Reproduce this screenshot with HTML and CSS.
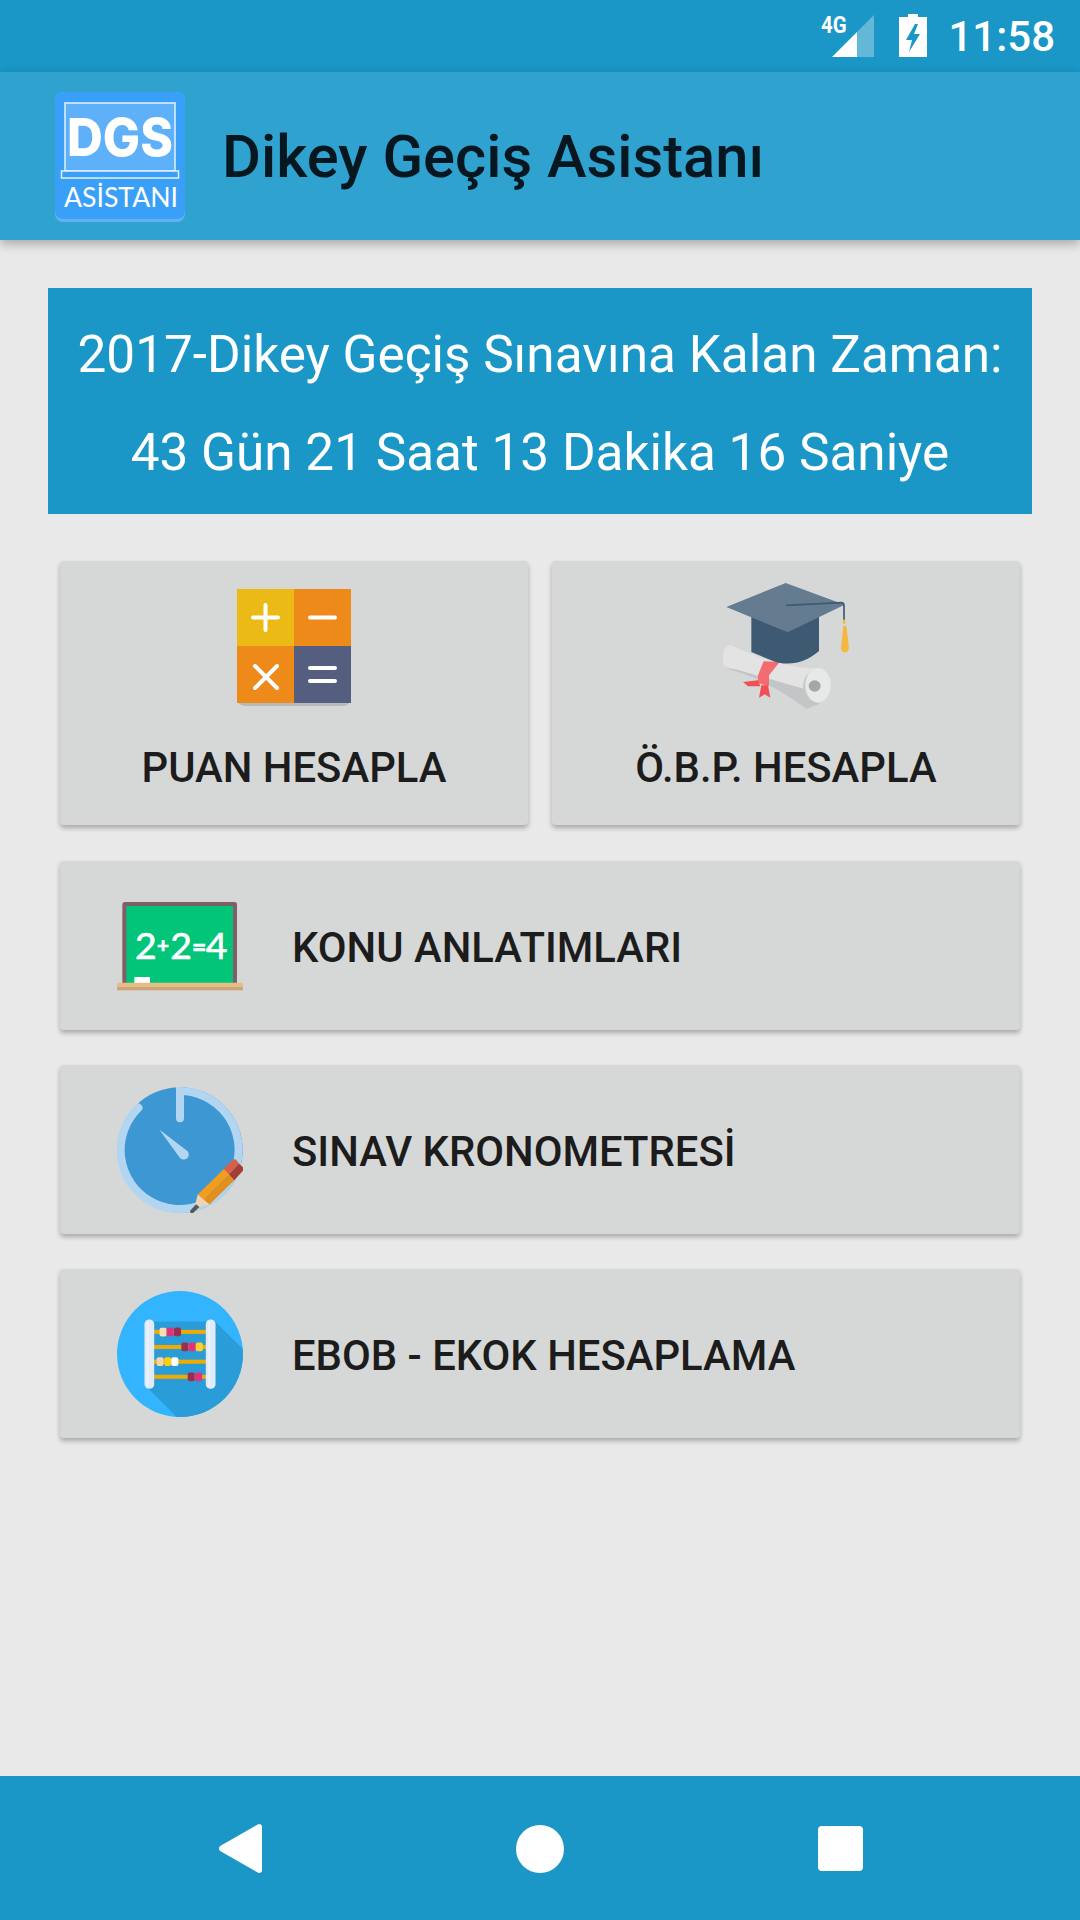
FILE: index.html
```html
<!DOCTYPE html>
<html lang="tr">
<head>
<meta charset="utf-8">
<title>Dikey Geçiş Asistanı</title>
<link rel="stylesheet" href="styles.css">
</head>
<body>
<div class="screen">
  <header class="status">
    <span class="net">4G</span>
    <svg class="cell" viewBox="0 0 42 42"><path class="cell-dim" d="M25 17 42 0V42H25Z"/><path class="cell-on" d="M0 42 25 17V42Z"/></svg>
    <svg class="batt" viewBox="0 0 28 43"><path class="batt-b" fill-rule="evenodd" d="M9 0H19V3H28V43H0V3H9ZM16 10 7 26H13L10 38 21 20H15L19 10Z"/></svg>
    <span class="time">11:58</span>
  </header>
  <header class="appbar">
    <svg class="logo" viewBox="0 0 130 130">
      <rect class="logo-edge" width="130" height="130" rx="8"/>
      <rect class="logo-bg" width="130" height="127" rx="8"/>
      <rect class="logo-screen" x="10" y="11" width="110" height="68"/>
      <rect class="logo-base" x="6.500" y="79" width="117" height="7"/>
      <text class="logo-dgs" x="12" y="64" textLength="106" lengthAdjust="spacingAndGlyphs">DGS</text>
      <text class="logo-sub" x="9" y="115" textLength="114" lengthAdjust="spacingAndGlyphs">ASİSTANI</text>
    </svg>
    <h1 class="title">Dikey Geçiş Asistanı</h1>
  </header>
  <main class="content">
    <section class="banner">
      <p class="banner-line">2017-Dikey Geçiş Sınavına Kalan Zaman:</p>
      <p class="banner-line">43 Gün 21 Saat 13 Dakika 16 Saniye</p>
    </section>
    <section class="pair">
      <button class="card card-tall">
        <svg class="icon-calc" viewBox="0 0 114 114">
          <rect class="c-shadow" x="0" y="3" width="114" height="114" rx="8"/>
          <rect class="c-yellow" width="57" height="57"/>
          <rect class="c-orange" x="57" width="57" height="57"/>
          <path class="c-orange" d="M0 57H57V114H0Z"/>
          <path class="c-slate" d="M57 57H114V114H57Z"/>
          <path class="c-mark" d="M16 28.500H41M28.500 16V41M73 28.500H98M18 77 40 99M40 77 18 99M73 79H98M73 92H98"/>
        </svg>
        <span class="label">PUAN HESAPLA</span>
      </button>
      <button class="card card-tall">
        <svg class="icon-cap" viewBox="100 68 378 378">
          <path fill="#c3c6c6" d="M110 325C200 345 290 400 350 446L390 430 350 340Z"/>
          <path fill="#e2e3e2" d="M122 254C105 255 97 280 100 305 103 320 112 322 125 323L365 392 385 325C300 322 220 300 122 254Z"/>
          <path fill="#c5c8c8" d="M340 385C340 345 360 325 395 325L390 425C365 425 340 415 340 385Z"/>
          <ellipse fill="#e7e9e9" cx="385" cy="375" rx="38" ry="52"/>
          <ellipse fill="#a4a7a6" cx="375" cy="377" rx="18" ry="17"/>
          <path fill="#f36d70" d="M222 303 270 305 238 345 238 378 205 368 205 345Z"/>
          <path fill="#f04f55" d="M160 365 205 360 212 378 175 378ZM215 375 235 375 242 412 225 402 208 412Z"/>
          <path fill="#3d5a72" d="M185 160H388V272C350 305 300 320 250 302L185 275Z"/>
          <path fill="#657c90" d="M110 140 288 68 465 133 294 216Z"/>
          <path class="tassel-cord" d="M289 135 455 127Q463 127 463 136V180"/>
          <rect fill="#f5b73e" x="460" y="178" width="7" height="12"/>
          <path fill="#f5b73e" d="M461 196H470L478 262Q476 276 466 276 455 276 454 262Z"/>
        </svg>
        <span class="label">Ö.B.P. HESAPLA</span>
      </button>
    </section>
    <section class="rows">
      <button class="card card-row">
        <svg class="icon-row" viewBox="52 8 378 378">
          <rect fill="#7f5f68" x="68" y="65" width="344" height="250" rx="8"/>
          <rect fill="#02c57a" x="80" y="77" width="320" height="238"/>
          <text class="board-text" x="106" y="235">2</text>
          <text class="board-sign" x="172" y="218">+</text>
          <text class="board-text" x="212" y="235">2</text>
          <text class="board-eq" x="277" y="228">=</text>
          <text class="board-text" x="318" y="235">4</text>
          <rect fill="#fff" x="104" y="290" width="47" height="20" rx="3"/>
          <rect fill="#e5bd85" x="52" y="307" width="378" height="23" rx="3"/>
          <rect fill="#c9a67e" x="52" y="320" width="378" height="10" rx="3"/>
        </svg>
        <span class="label">KONU ANLATIMLARI</span>
      </button>
      <button class="card card-row">
        <svg class="icon-row" viewBox="52 52 376 376">
          <circle fill="#3c97d3" cx="240" cy="240" r="187"/>
          <path class="clock-ring" d="M116 114A176 176 0 1 0 240 64V145"/>
          <path fill="#b2d5f1" d="M178 179 262 243A15 15 0 0 1 240 264Z"/>
          <path fill="#f29d1d" d="M293 373 372 296 388 313 310 390Z"/>
          <path fill="#e28f1e" d="M310 390 388 313 402 330 328 403Z"/>
          <path fill="#d96048" d="M370 296 397 270Q403 265 410 272L416 280 386 312Z"/>
          <path fill="#a43f35" d="M386 312 416 280 427 291Q432 297 427 303L402 330Z"/>
          <path fill="#ebd5b6" d="M293 373 328 403 282 414Z"/>
          <path fill="#585858" d="M270 421 288 402 298 410 280 427Q275 431 271 427Z"/>
        </svg>
        <span class="label">SINAV KRONOMETRESİ</span>
      </button>
      <button class="card card-row">
        <svg class="icon-row" viewBox="52 34 376 376">
          <defs><clipPath id="abacus-clip"><circle cx="240" cy="222" r="188"/></clipPath></defs>
          <circle fill="#32b5fe" cx="240" cy="222" r="188"/>
          <path clip-path="url(#abacus-clip)" fill="#2a9dd9" d="M160 125 318 125 345 125 430 210V420H240L140 320Z"/>
          <g fill="#f0aa00">
            <rect x="160" y="150" width="160" height="12"/>
            <rect x="160" y="195" width="160" height="12"/>
            <rect x="160" y="239" width="160" height="12"/>
            <rect x="160" y="284" width="160" height="12"/>
          </g>
          <rect fill="#f5e0b5" x="179" y="144" width="21" height="26" rx="6"/>
          <rect fill="#e0327f" x="200" y="143" width="21" height="26" rx="6"/>
          <rect fill="#982f50" x="222" y="143" width="21" height="26" rx="6"/>
          <rect fill="#982f50" x="244" y="188" width="21" height="26" rx="6"/>
          <rect fill="#e0327f" x="266" y="188" width="21" height="26" rx="6"/>
          <rect fill="#fdd130" x="287" y="188" width="21" height="26" rx="6"/>
          <rect fill="#f9d4a5" x="170" y="232" width="21" height="26" rx="6"/>
          <rect fill="#ffd000" x="193" y="232" width="21" height="26" rx="6"/>
          <rect fill="#fff" x="214" y="232" width="21" height="26" rx="6"/>
          <rect fill="#982f50" x="263" y="277" width="21" height="26" rx="6"/>
          <rect fill="#e0327f" x="285" y="277" width="21" height="26" rx="6"/>
          <rect fill="#dfeafa" x="134" y="119" width="29" height="207" rx="14"/>
          <rect fill="#dfeafa" x="317" y="119" width="29" height="207" rx="14"/>
          <rect fill="#fff" opacity=".3" x="140" y="124" width="8" height="197" rx="4"/>
          <rect fill="#fff" opacity=".3" x="323" y="124" width="8" height="197" rx="4"/>
        </svg>
        <span class="label">EBOB - EKOK HESAPLAMA</span>
      </button>
    </section>
  </main>
  <nav class="navbar">
    <svg class="nav-back" viewBox="0 0 42 49" preserveAspectRatio="none"><path d="M39 0Q42 0 42 3V46Q42 49 39 49L37 48 2 27Q0 24.500 2 22L37 1Z"/></svg>
    <span class="nav-home"></span>
    <span class="nav-recent"></span>
  </nav>
</div>
</body>
</html>
```
FILE: styles.css
```css
* { box-sizing: border-box; }
html, body { margin: 0; padding: 0; }
body { font-family: Roboto, "Noto Sans", sans-serif; background: #e9e9e9; }
.screen { width: 1080px; height: 1920px; display: flex; flex-direction: column; overflow: hidden; }

.status { height: 72px; flex: none; background: #1a97c6; display: flex; align-items: center; justify-content: flex-end; padding-right: 25px; color: #fff; position: relative; }
.net { position: absolute; left: 821px; top: 12px; font-size: 24px; line-height: 26px; font-weight: 700; transform: scaleX(.85); transform-origin: left; }
.cell { width: 42px; height: 42px; margin-top: -1px; margin-right: 25px; }
.cell-on { fill: #fff; }
.cell-dim { fill: #fff; opacity: .32; }
.batt { width: 28px; height: 43px; margin-top: -1px; margin-right: 21px; }
.batt-b { fill: #fff; }
.time { font-size: 42px; line-height: 50px; margin-top: 2px; font-weight: 500; }

.appbar { height: 168px; flex: none; background: #30a2d0; display: flex; align-items: center; padding-left: 55px; box-shadow: 0 4px 10px rgba(0,0,0,.28); position: relative; z-index: 1; }
.logo { width: 130px; height: 130px; flex: none; margin-top: 1px; }
.logo-edge { fill: #62b0f5; }
.logo-bg { fill: #3aa0f7; }
.logo-screen { fill: #5eb1f9; stroke: #e3f1fd; stroke-width: 1.500; }
.logo-base { fill: #3aa0f7; stroke: #e3f1fd; stroke-width: 1.500; }
.logo-dgs { font-family: Inter, sans-serif; font-weight: 800; font-size: 52px; fill: #fff; }
.logo-sub { font-family: Lato, sans-serif; font-weight: 400; font-size: 27px; fill: #fff; }
.title { margin: 2px 0 0 37px; font-size: 59.700px; line-height: 64px; font-weight: 500; color: #07171f; }

.content { flex: 1; padding: 48px 48px 0; }
.banner { height: 226px; background: #1a97c6; padding-top: 18px; text-align: center; color: #fff; }
.banner-line { margin: 0; font-size: 51.300px; line-height: 98px; }

.pair { display: grid; grid-template-columns: 468px 468px; column-gap: 24px; padding: 47px 12px 0; }
.rows { display: flex; flex-direction: column; gap: 35px; padding: 36px 12px 0; }

.card { border: 0; background: #d6d8d8; border-radius: 4px; box-shadow: 0 3px 5px rgba(0,0,0,.28); color: #1c1c1c; font-family: inherit; padding: 0; }
.label { font-size: 41.800px; line-height: 50px; font-weight: 500; padding-top: 4px; }
.card-tall { height: 264px; display: flex; flex-direction: column; align-items: center; }
.icon-calc { width: 114px; height: 114px; margin-top: 28px; margin-bottom: 36px; overflow: visible; flex: none; }
.icon-cap { width: 126px; height: 126px; margin-top: 22px; margin-bottom: 30px; flex: none; }
.card-row { height: 169px; display: flex; align-items: center; padding-left: 57px; gap: 49px; }
.icon-row { width: 126px; height: 126px; flex: none; }

.c-yellow { fill: #ebba16; }
.c-orange { fill: #ee8a1a; }
.c-slate { fill: #545f80; }
.c-shadow { fill: #000; opacity: .14; }
.c-mark { fill: none; stroke: #fff; stroke-width: 4; stroke-linecap: round; }
.tassel-cord { fill: none; stroke: #3d5a72; stroke-width: 5; }
.board-text { font-family: Lato, sans-serif; font-weight: 400; font-size: 112px; fill: #fff; stroke: #fff; stroke-width: 2; }
.board-sign { font-family: Lato, sans-serif; font-weight: 700; font-size: 62px; fill: #fff; stroke: #fff; stroke-width: 2; }
.board-eq { font-family: Lato, sans-serif; font-weight: 700; font-size: 74px; fill: #fff; stroke: #fff; stroke-width: 2; }
.clock-ring { fill: none; stroke: #b2d5f1; stroke-width: 24; stroke-linecap: round; }

.navbar { height: 144px; flex: none; background: #1a97c6; display: grid; grid-template-columns: repeat(3, 300px); justify-content: center; justify-items: center; align-items: center; }
.nav-back { width: 44px; height: 49px; fill: #fff; margin-left: -1px; margin-top: 1px; }
.nav-home { width: 48px; height: 48px; border-radius: 50%; background: #fff; margin-top: 1px; }
.nav-recent { width: 45px; height: 45px; border-radius: 4px; background: #fff; margin-top: 1px; }
```
